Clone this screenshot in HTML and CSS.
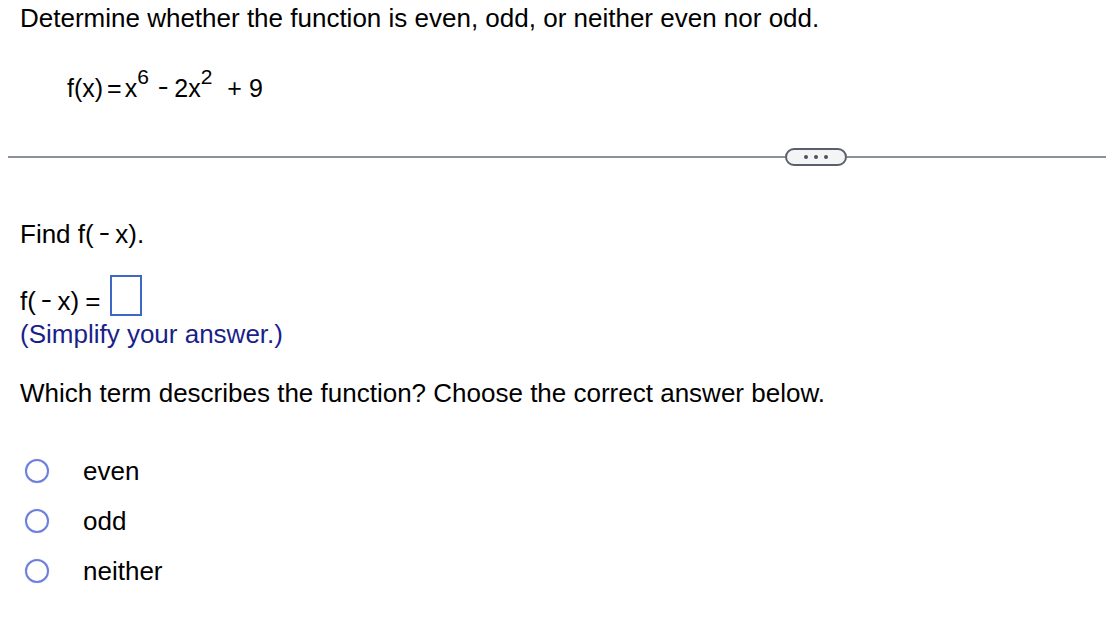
FILE: index.html
```html
<!DOCTYPE html>
<html>
<head>
<meta charset="utf-8">
<link rel="stylesheet" href="styles.css">
</head>
<body>
<div class="page">
  <p class="prompt">Determine whether the function is even, odd, or neither even nor odd.</p>
  <p class="equation">f(x)<span class="eq">=</span>x<sup>6</sup><span class="op op-minus">-</span>2x<sup>2</sup><span class="op op-plus">+</span>9</p>
  <div class="divider">
    <span class="line line-left"></span>
    <span class="more"><span class="dot"></span><span class="dot"></span><span class="dot"></span></span>
    <span class="line line-right"></span>
  </div>
  <p class="find">Find f(<span class="minus">-</span>x).</p>
  <div class="answer-row">
    <span class="answer-label">f(<span class="minus">-</span>x)<span class="eq2">=</span></span><span class="answer-box"></span>
  </div>
  <p class="hint">(Simplify your answer.)</p>
  <p class="question">Which term describes the function? Choose the correct answer below.</p>
  <ul class="choices">
    <li class="choice"><span class="radio"></span><span class="label">even</span></li>
    <li class="choice"><span class="radio"></span><span class="label">odd</span></li>
    <li class="choice"><span class="radio"></span><span class="label">neither</span></li>
  </ul>
</div>
</body>
</html>
```

FILE: styles.css
```css
html, body {
  margin: 0;
  padding: 0;
  background: #ffffff;
}
body {
  font-family: "Liberation Sans", Arial, sans-serif;
  color: #000;
  font-size: 26px;
  line-height: 30px;
}
.page {
  width: 1106px;
  height: 626px;
  overflow: hidden;
}
p { margin: 0; }
.prompt {
  padding: 3px 0 0 20px;
  height: 30px;
}
.equation {
  margin-top: 38px;
  padding-left: 67px;
  font-size: 25px;
  height: 30px;
  white-space: nowrap;
}
.equation sup {
  font-size: 21px;
  vertical-align: 13px;
  line-height: 0;
}
.eq { margin: 0 3px 0 4px; }
.op { display: inline-block; }
.op-minus { margin: 0 7px 0 10px; vertical-align: 2px; transform: scaleX(1.3); }
.op-plus { margin: 0 7px 0 15px; }
.divider {
  display: flex;
  align-items: center;
  margin-top: 47px;
  padding-left: 8px;
  height: 18px;
}
.line {
  height: 2px;
  background: #8b909b;
}
.line-left { width: 777px; }
.line-right { flex: 1; }
.more {
  box-sizing: border-box;
  width: 62px;
  height: 18px;
  border: 2px solid #59606b;
  border-radius: 9px;
  background: #f3f4f6;
  display: flex;
  justify-content: center;
  align-items: center;
  gap: 6px;
}
.dot {
  width: 4px;
  height: 4px;
  border-radius: 50%;
  background: #4b525c;
}
.find {
  margin-top: 51px;
  padding-left: 20px;
  height: 30px;
}
.minus {
  display: inline-block;
  margin: 0 7px 0 6px;
  vertical-align: 2px;
  transform: scaleX(1.3);
}
.answer-row {
  display: flex;
  align-items: flex-start;
  padding-left: 20px;
  margin-top: 28px;
  height: 41px;
}
.answer-label {
  margin-top: 9px;
}
.eq2 { margin-left: 6px; margin-right: 10px; }
.answer-box {
  box-sizing: border-box;
  width: 32px;
  height: 41px;
  border: 2px solid #3f67c7;
}
.hint {
  color: #1b1f8a;
  padding-left: 20px;
  margin-top: 3px;
  height: 30px;
}
.question {
  padding-left: 20px;
  margin-top: 29px;
  height: 30px;
}
.choices {
  list-style: none;
  margin: 48px 0 0 0;
  padding: 0;
}
.choice {
  display: flex;
  align-items: center;
  height: 30px;
  margin-bottom: 20px;
  padding-left: 25px;
}
.radio {
  box-sizing: border-box;
  width: 24px;
  height: 24px;
  border: 2px solid #6d7fdc;
  border-radius: 50%;
  box-shadow: 0 0 1px #aab4ee;
}
.label {
  margin-left: 34px;
}
```
